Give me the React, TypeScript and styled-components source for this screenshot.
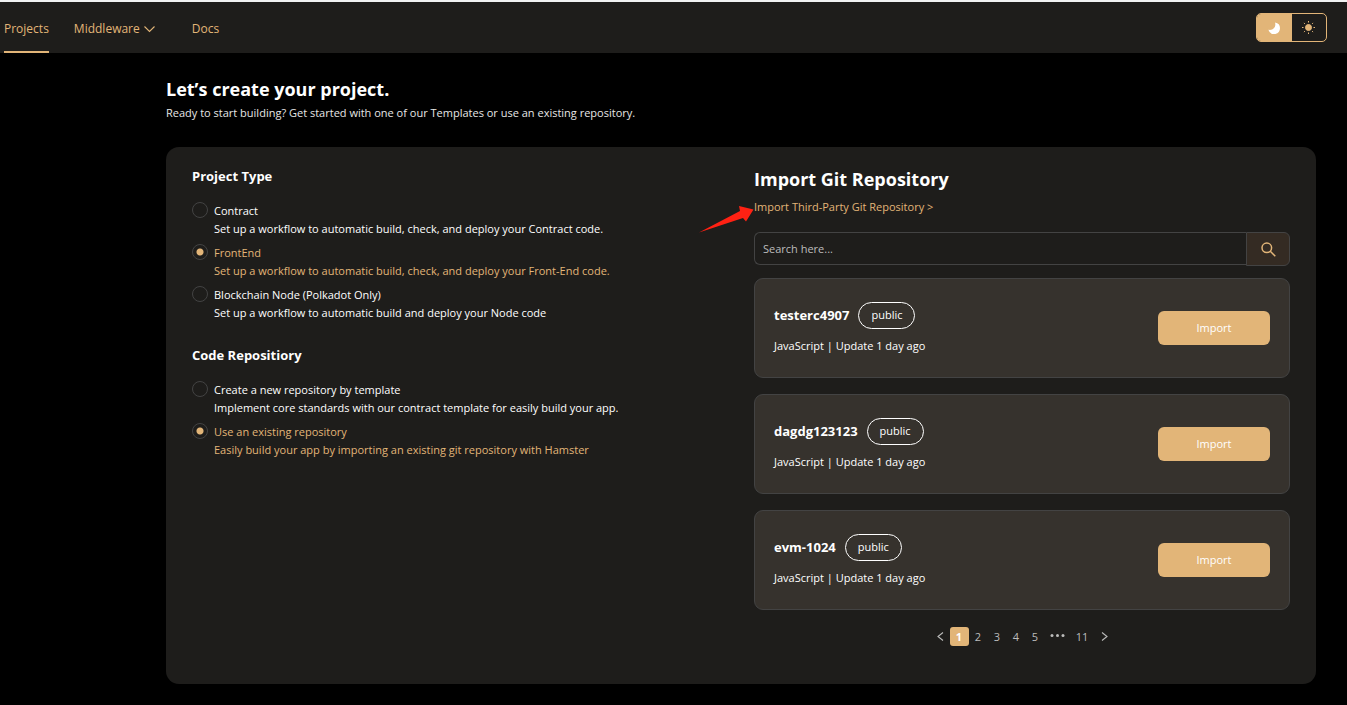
import React, { useState } from "react";
import styled, { createGlobalStyle } from "styled-components";

const gold = "#e2b578";
const line = "#434343";

const GlobalStyle = createGlobalStyle`
  *, *::before, *::after { box-sizing: border-box; }
  body {
    margin: 0;
    background: #000;
    color: #fff;
    font-family: "Segoe UI", "Open Sans", "Noto Sans", sans-serif;
    font-size: 11px;
    line-height: 18px;
  }
  button, input { font: inherit; color: inherit; }
  h1, h2, h3, p { margin: 0; }
  a { color: ${gold}; text-decoration: none; }
`;

const Page = styled.div`
  min-height: 100vh;
  border-top: 2px solid #f0f2f2;
`;

const Header = styled.header`
  display: flex;
  justify-content: space-between;
  height: 51px;
  padding: 0 20px 0 4px;
  background: #1e1d1b;
`;

const Nav = styled.nav`
  display: flex;
  align-items: stretch;
  gap: 25px;
  font-size: 12px;
`;

const NavLink = styled.a<{ $active?: boolean; $wide?: boolean }>`
  display: flex;
  align-items: center;
  gap: 4px;
  padding-top: 4px;
  margin-right: ${(p) => (p.$wide ? "12px" : "0")};
  border-bottom: 2px solid ${(p) => (p.$active ? gold : "transparent")};
`;

const ThemeSwitch = styled.div`
  display: flex;
  align-self: center;
  width: 71px;
  height: 29px;
  border: 1px solid ${gold};
  border-radius: 5px;
  overflow: hidden;
`;

const ThemeButton = styled.button<{ $on?: boolean }>`
  flex: 1;
  display: flex;
  align-items: center;
  justify-content: center;
  padding: 0;
  border: 0;
  background: ${(p) => (p.$on ? gold : "transparent")};
`;

const Main = styled.main`
  padding: 23px 31px 21px 166px;
`;

const Title = styled.h1`
  font-size: 18px;
  line-height: 26px;
  font-weight: 700;
`;

const Lead = styled.p`
  margin-top: 2px;
  color: #e6e6e6;
`;

const Panel = styled.section`
  display: grid;
  grid-template-columns: 1fr 1fr;
  gap: 26px;
  margin-top: 25px;
  padding: 19px 26px 38px;
  border-radius: 13px;
  background: #1e1d1b;
`;

const Group = styled.fieldset`
  margin: 0 0 17px;
  padding: 0;
  border: 0;
`;

const GroupTitle = styled.legend`
  padding: 0;
  margin-bottom: 16px;
  font-size: 13px;
  line-height: 20px;
  font-weight: 700;
`;

const Option = styled.label<{ $on: boolean }>`
  display: grid;
  grid-template-columns: 16px 1fr;
  column-gap: 6px;
  margin-bottom: 6px;
  color: ${(p) => (p.$on ? gold : "#fff")};
  cursor: pointer;
`;

const Radio = styled.input`
  appearance: none;
  width: 16px;
  height: 16px;
  margin: 0;
  border: 1px solid ${line};
  border-radius: 50%;
  &:checked {
    background: radial-gradient(circle, ${gold} 3px, transparent 4px);
  }
`;

const Hint = styled.span`
  grid-column: 2;
`;

const SectionTitle = styled.h2`
  font-size: 18px;
  line-height: 26px;
  font-weight: 700;
`;

const LinkRow = styled.p`
  position: relative;
  margin: 6px 0 16px;
`;

const Pointer = styled.svg`
  position: absolute;
  right: 100%;
  top: 8px;
`;

const Search = styled.form`
  display: flex;
  height: 34px;
  margin-bottom: 12px;
`;

const SearchInput = styled.input`
  flex: 1;
  min-width: 0;
  height: 33px;
  padding: 0 8px;
  border: 1px solid ${line};
  border-right: 0;
  border-radius: 6px 0 0 6px;
  background: transparent;
  outline: 0;
  &::placeholder { color: #bcbcbb; opacity: 1; }
`;

const SearchButton = styled.button`
  display: flex;
  align-items: center;
  justify-content: center;
  width: 44px;
  padding: 0;
  border: 1px solid ${line};
  border-radius: 0 6px 6px 0;
  background: #342b23;
`;

const RepoList = styled.ul`
  display: grid;
  gap: 16px;
  margin: 0;
  padding: 0;
  list-style: none;
`;

const RepoCard = styled.li`
  display: flex;
  align-items: center;
  justify-content: space-between;
  height: 100px;
  padding: 0 19px;
  border: 1px solid ${line};
  border-radius: 9px;
  background: #36322d;
`;

const RepoHead = styled.div`
  display: flex;
  align-items: center;
  gap: 9px;
  margin-bottom: 8px;
`;

const RepoName = styled.h3`
  font-size: 13px;
  line-height: 20px;
  font-weight: 700;
`;

const Badge = styled.span`
  padding: 3px 12px 5px;
  border: 1px solid #fff;
  border-radius: 14px;
  line-height: 17px;
`;

const ImportButton = styled.button`
  width: 112px;
  height: 34px;
  padding: 0;
  border: 0;
  border-radius: 6px;
  background: ${gold};
  color: #fff;
`;

const Pagination = styled.nav`
  display: flex;
  justify-content: center;
  margin-top: 17px;
`;

const PageButton = styled.button<{ $on?: boolean; $wide?: boolean }>`
  display: flex;
  align-items: center;
  justify-content: center;
  width: ${(p) => (p.$wide ? "25px" : "19px")};
  height: 19px;
  padding: 0;
  border: 0;
  border-radius: 3px;
  background: ${(p) => (p.$on ? gold : "transparent")};
  color: ${(p) => (p.$on ? "#fff" : "#bcbcbb")};
  font-weight: ${(p) => (p.$on ? 700 : 400)};
`;

const projectTypes = [
  ["Contract", "Set up a workflow to automatic build, check, and deploy your Contract code."],
  ["FrontEnd", "Set up a workflow to automatic build, check, and deploy your Front-End code."],
  ["Blockchain Node (Polkadot Only)", "Set up a workflow to automatic build and deploy your Node code"],
];

const repoSources = [
  ["Create a new repository by template", "Implement core standards with our contract template for easily build your app."],
  ["Use an existing repository", "Easily build your app by importing an existing git repository with Hamster"],
];

const repos = ["testerc4907", "dagdg123123", "evm-1024"];

function RadioGroup({ title, name, options }: { title: string; name: string; options: string[][] }) {
  const [selected, setSelected] = useState(1);
  return (
    <Group>
      <GroupTitle>{title}</GroupTitle>
      {options.map(([label, hint], i) => (
        <Option key={label} $on={i === selected}>
          <Radio type="radio" name={name} checked={i === selected} onChange={() => setSelected(i)} />
          <span>{label}</span>
          <Hint>{hint}</Hint>
        </Option>
      ))}
    </Group>
  );
}

function Chevron({ d }: { d: string }) {
  return (
    <svg width="11" height="11" viewBox="0 0 11 11" fill="none" stroke="currentColor" strokeWidth="1.1" aria-hidden="true">
      <path d={d} />
    </svg>
  );
}

export default function App() {
  const [page, setPage] = useState(1);
  return (
    <Page>
      <GlobalStyle />
      <Header>
        <Nav aria-label="Main">
          <NavLink href="#projects" $active>Projects</NavLink>
          <NavLink href="#middleware" $wide>
            Middleware
            <Chevron d="M.5 3.5 5.5 8.5 10.5 3.5" />
          </NavLink>
          <NavLink href="#docs">Docs</NavLink>
        </Nav>
        <ThemeSwitch>
          <ThemeButton type="button" $on aria-label="Dark theme">
            <svg width="12" height="12" viewBox="0 0 12 12" fill="#fff">
              <path d="M7 .4A5.900 5.900 0 1 1 .4 7.800C4.800 8.800 8.500 5 7 .4Z" />
            </svg>
          </ThemeButton>
          <ThemeButton type="button" aria-label="Light theme">
            <svg width="13" height="13" viewBox="0 0 13 13" fill={gold} stroke={gold}>
              <circle cx="6.500" cy="6.500" r="3" />
              <path d="M6.500 0v1.500M6.500 11.500V13M0 6.500h1.500M11.500 6.500H13M1.900 1.900l1 1M10.100 10.100l1 1M1.900 11.100l1-1M10.100 2.900l1-1" />
            </svg>
          </ThemeButton>
        </ThemeSwitch>
      </Header>
      <Main>
        <Title>Let’s create your project.</Title>
        <Lead>Ready to start building? Get started with one of our Templates or use an existing repository.</Lead>
        <Panel>
          <div>
            <RadioGroup title="Project Type" name="type" options={projectTypes} />
            <RadioGroup title="Code Repositiory" name="source" options={repoSources} />
          </div>
          <div>
            <SectionTitle>Import Git Repository</SectionTitle>
            <LinkRow>
              <Pointer width="55" height="27" viewBox="0 0 55 27" fill="#ff2113" aria-hidden="true">
                <path d="M0 26.500 41 5 40 0 54.500 3.500 47 15.500 44 12Z" />
              </Pointer>
              <a href="#third-party">Import Third-Party Git Repository &gt;</a>
            </LinkRow>
            <Search onSubmit={(e) => e.preventDefault()}>
              <SearchInput type="text" placeholder="Search here..." aria-label="Search repositories" />
              <SearchButton type="submit" aria-label="Search">
                <svg width="15" height="15" viewBox="0 0 15 15" fill="none" stroke={gold} strokeWidth="1.5">
                  <circle cx="5.800" cy="5.800" r="4.800" />
                  <path d="m9.300 9.300 5 5" />
                </svg>
              </SearchButton>
            </Search>
            <RepoList>
              {repos.map((name) => (
                <RepoCard key={name}>
                  <div>
                    <RepoHead>
                      <RepoName>{name}</RepoName>
                      <Badge>public</Badge>
                    </RepoHead>
                    <p>JavaScript | Update 1 day ago</p>
                  </div>
                  <ImportButton type="button">Import</ImportButton>
                </RepoCard>
              ))}
            </RepoList>
            <Pagination aria-label="Pages">
              <PageButton type="button" aria-label="Previous">
                <Chevron d="M8 1.500 3 5.500 8 9.500" />
              </PageButton>
              {[1, 2, 3, 4, 5].map((n) => (
                <PageButton key={n} type="button" $on={n === page} onClick={() => setPage(n)}>{n}</PageButton>
              ))}
              <PageButton type="button" $wide aria-label="More pages">
                <svg width="15" height="5" viewBox="0 0 15 5" fill="currentColor">
                  <circle cx="2" cy="1.500" r="1.500" />
                  <circle cx="7.500" cy="1.500" r="1.500" />
                  <circle cx="13" cy="1.500" r="1.500" />
                </svg>
              </PageButton>
              <PageButton type="button" $wide onClick={() => setPage(11)}>11</PageButton>
              <PageButton type="button" aria-label="Next">
                <Chevron d="M3 1.500 8 5.500 3 9.500" />
              </PageButton>
            </Pagination>
          </div>
        </Panel>
      </Main>
    </Page>
  );
}
